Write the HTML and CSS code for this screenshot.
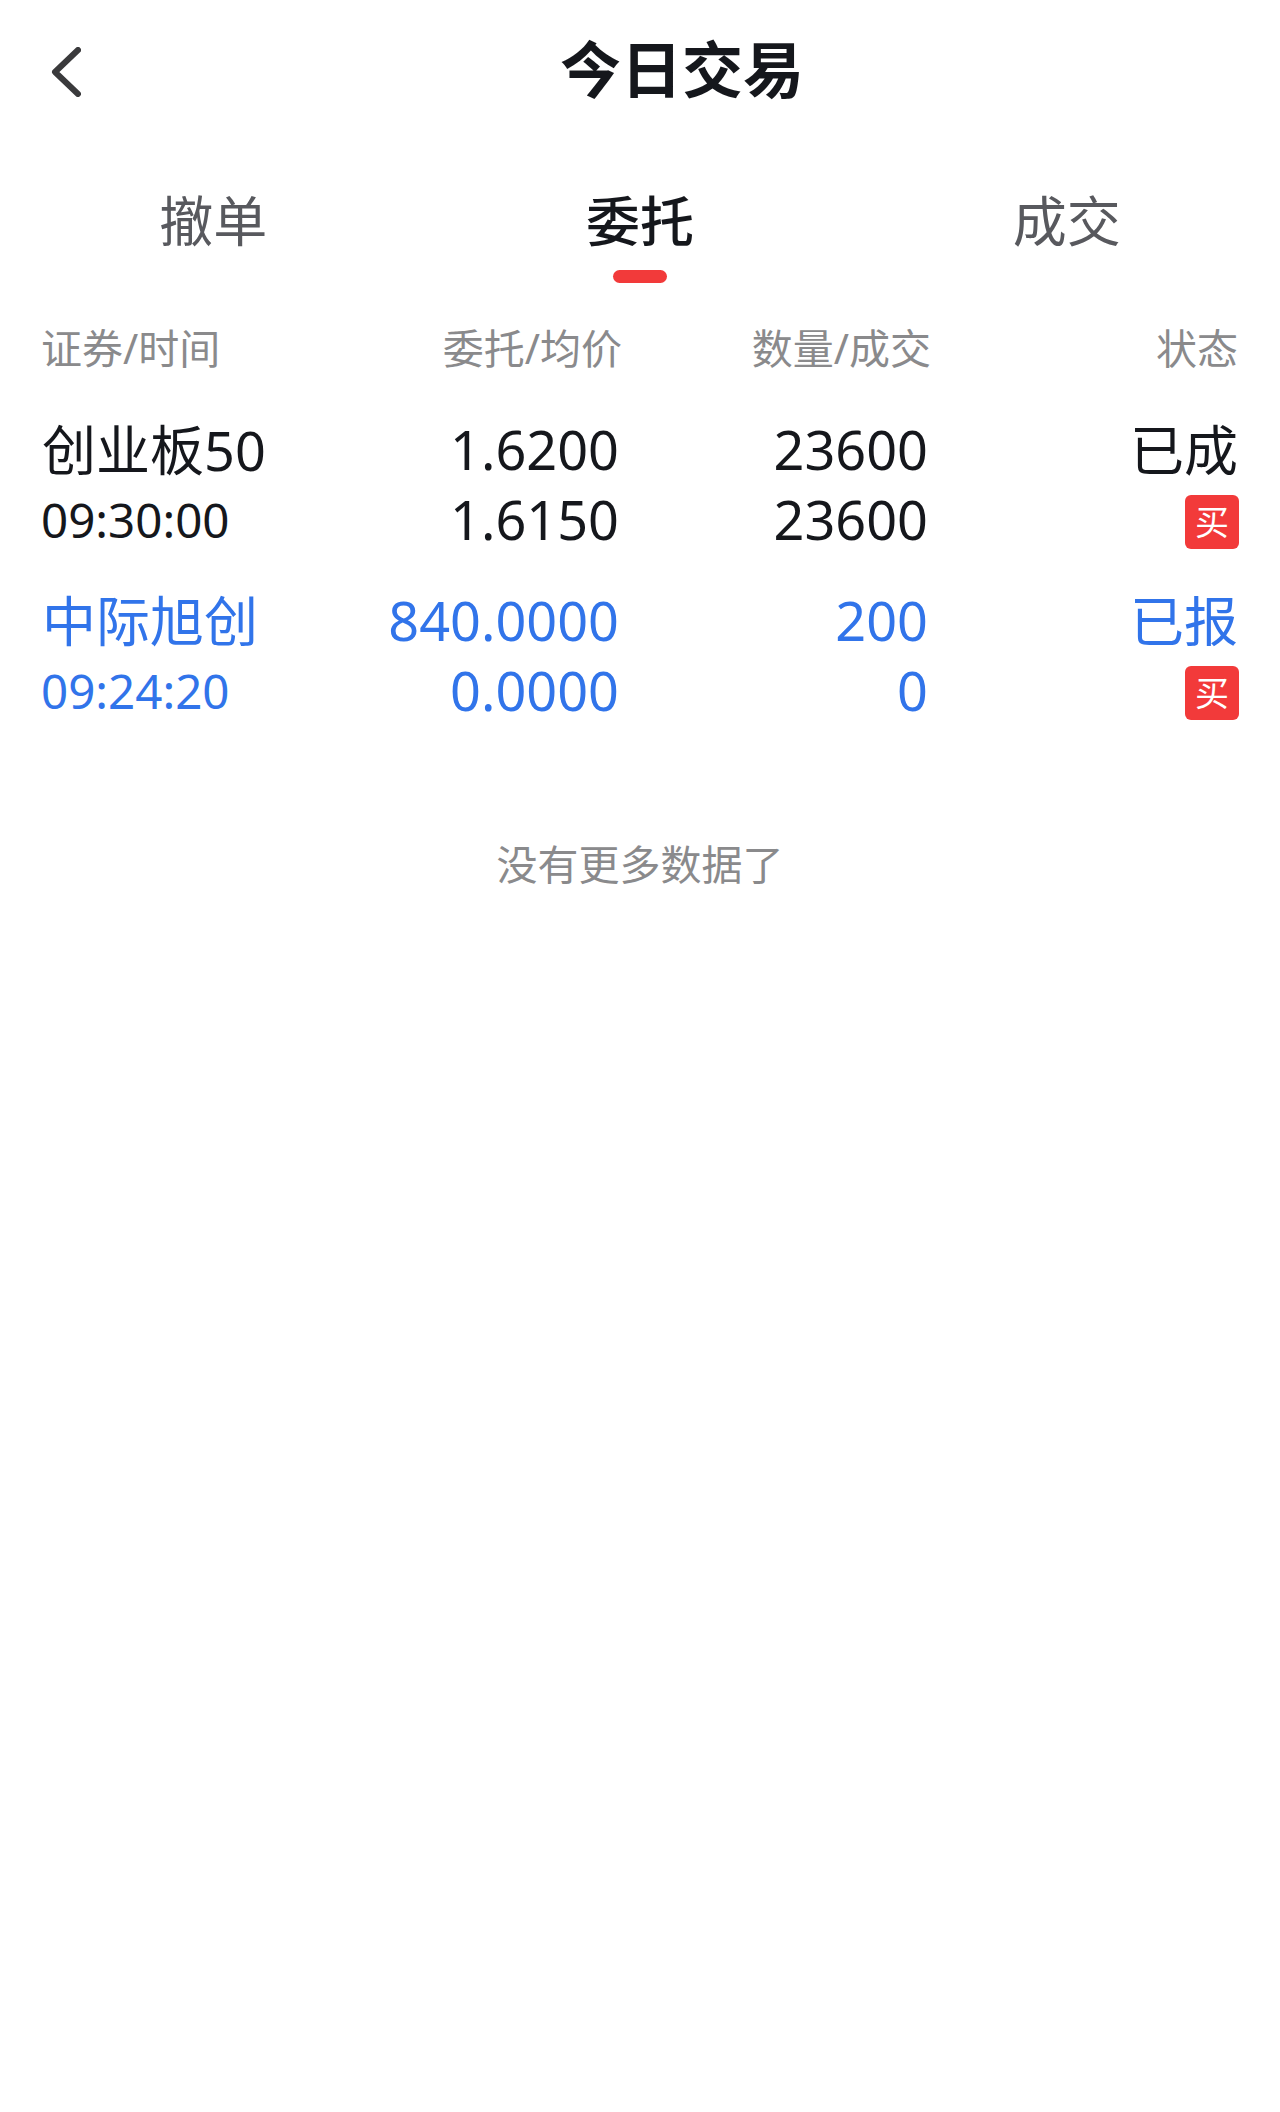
FILE: index.html
```html
<!DOCTYPE html>
<html lang="zh-CN">
<head>
    <meta charset="UTF-8">
    <meta name="viewport" content="width=device-width, initial-scale=1.0">
    <title>今日交易</title>
    <link rel="stylesheet" href="styles.css">
</head>
<body>
    <div class="page">
        <div class="nav-bar">
            <a class="back-btn">
                <svg width="30" height="50" viewBox="0 0 30 50">
                    <path d="M27 3 L4 25 L27 47" fill="none" stroke="#3a3a3c" stroke-width="6" stroke-linecap="round" stroke-linejoin="round"/>
                </svg>
            </a>
            <h1 class="nav-title">今日交易</h1>
        </div>

        <div class="tabs">
            <div class="tab">撤单</div>
            <div class="tab active">委托</div>
            <div class="tab">成交</div>
        </div>

        <div class="table-head">
            <div>证券/时间</div>
            <div class="num">委托/均价</div>
            <div class="num">数量/成交</div>
            <div class="num">状态</div>
        </div>

        <div class="order">
            <div class="cell-name">创业板50</div>
            <div class="num">1.6200</div>
            <div class="num">23600</div>
            <div class="num cell-status">已成</div>
            <div class="cell-time">09:30:00</div>
            <div class="num">1.6150</div>
            <div class="num">23600</div>
            <div class="cell-side"><span class="side-badge">买</span></div>
        </div>

        <div class="order pending">
            <div class="cell-name">中际旭创</div>
            <div class="num">840.0000</div>
            <div class="num">200</div>
            <div class="num cell-status">已报</div>
            <div class="cell-time">09:24:20</div>
            <div class="num">0.0000</div>
            <div class="num">0</div>
            <div class="cell-side"><span class="side-badge">买</span></div>
        </div>

        <div class="no-more">没有更多数据了</div>
    </div>
</body>
</html>
```

FILE: styles.css
```css
* {
    margin: 0;
    padding: 0;
    box-sizing: border-box;
}

body {
    font-family: "Noto Sans", "Noto Sans CJK SC", sans-serif;
    background: #fff;
    color: #15171c;
}

.page {
    width: 1280px;
    min-height: 2112px;
    background: #fff;
}

.nav-bar {
    display: flex;
    align-items: center;
    height: 140px;
    padding-left: 42px;
}

.back-btn {
    display: flex;
    align-items: center;
    width: 42px;
    padding: 3px 0 0 9px;
}

.nav-title {
    flex: 1;
    text-align: center;
    font-size: 61px;
    font-weight: 700;
    line-height: 70px;
}

.tabs {
    display: flex;
    height: 150px;
}

.tab {
    flex: 1;
    padding-top: 46px;
    text-align: center;
    font-size: 54px;
    line-height: 70px;
    color: #58595e;
}

.tab.active {
    color: #15171c;
    font-weight: 500;
}

.tab.active::after {
    content: "";
    display: block;
    width: 54px;
    height: 13px;
    margin: 14px auto 0;
    border-radius: 7px;
    background: #f23a3a;
}

.table-head,
.order {
    display: grid;
    grid-template-columns: 267px 310px 309px 310px;
    padding: 0 42px;
}

.table-head {
    grid-template-columns: 271px 310px 309px 307px;
    align-items: center;
    height: 60px;
    margin-top: 26px;
    padding-left: 41px;
    font-size: 41px;
    color: #8a8a8c;
}

.order {
    grid-auto-rows: 70px;
    align-items: center;
    padding-top: 31px;
    font-size: 54px;
}

.table-head + .order {
    padding-top: 38px;
}

.order.pending {
    color: #3174ea;
}

.num {
    text-align: right;
}

.cell-name,
.cell-status {
    margin-top: -4px;
}

.cell-time {
    margin-left: -1px;
    font-size: 47.5px;
}

.cell-side {
    display: flex;
    justify-content: flex-end;
}

.side-badge {
    width: 54px;
    height: 54px;
    margin-top: 6px;
    margin-right: -1px;
    border-radius: 6px;
    background: #f23a3a;
    color: #fff;
    font-size: 34px;
    line-height: 54px;
    text-align: center;
}

.no-more {
    margin-top: 109px;
    text-align: center;
    font-size: 41px;
    line-height: 60px;
    color: #8a8a8c;
}
```
